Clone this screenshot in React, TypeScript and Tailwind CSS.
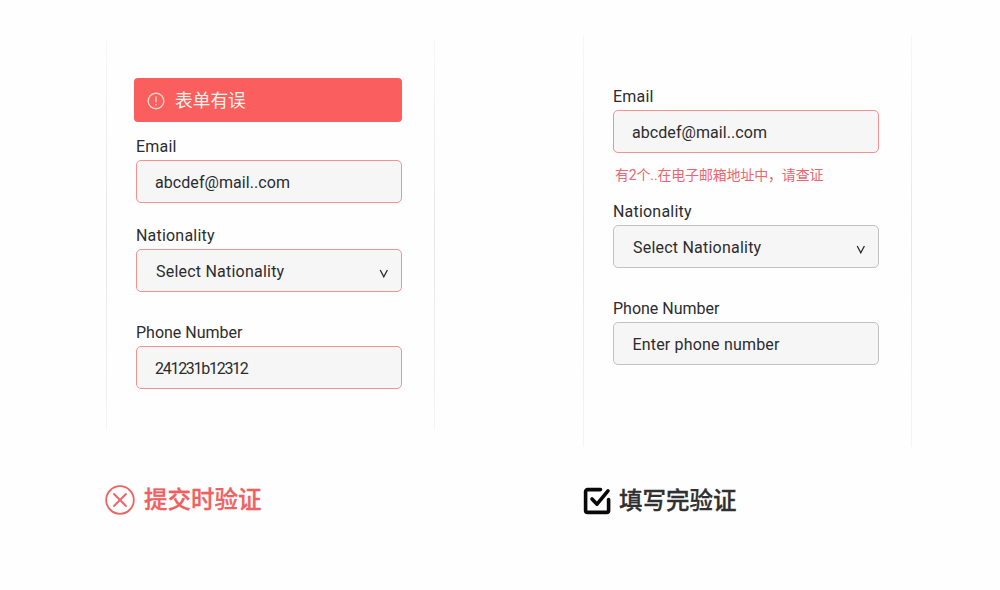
import React from 'react';
import clsx from 'clsx';

interface FieldProps {
  label: string;
  labelClass?: string;
  value: string;
  valueClass?: string;
  invalid?: boolean;
  select?: boolean;
  className?: string;
}

const Field: React.FC<FieldProps> = ({ label, labelClass, value, valueClass, invalid, select, className }) => (
  <div className={clsx('w-[266px]', className)}>
    <div className={clsx('mb-1 h-5 whitespace-nowrap text-base leading-[22px] text-[#2c2c2e]', labelClass)}>{label}</div>
    <div
      className={clsx(
        'flex h-[43px] items-center justify-between rounded-[5px] border bg-[#f6f6f6] pr-[13px] pl-[18px]',
        invalid ? 'border-[#f29292]' : 'border-[#c2c2c2]',
      )}
    >
      <span className={clsx('pt-0.5 whitespace-nowrap text-base leading-5 text-[#2c2c2e]', valueClass)}>{value}</span>
      {select && (
        <svg className="mt-[5px] h-[9px] w-[9px]" viewBox="0 0 9 9" fill="none" stroke="#2c2c2e" strokeWidth="1.3">
          <path d="M1.2 1 4.8 7.8 8.4 1" />
        </svg>
      )}
    </div>
  </div>
);

// Side edges fade out towards the top and bottom of the card
const Edge = () => (
  <div className="w-px shrink-0 bg-linear-to-b from-[#f7f7f7] via-[#e6e6e6] to-[#f4f4f4]" />
);

const SubmitPanel = () => (
  <section className="w-[329px]">
    <div className="mt-[40px] flex h-[390px]">
      <Edge />
      <div className="flex-1 pt-[38px] pl-[27px]">
        <div className="mb-[14px] flex h-[44px] w-[268px] items-center rounded-[4px] bg-[#fb5e5e] pl-[12.5px]">
          <svg className="mt-px h-[18px] w-[18px]" viewBox="0 0 18 18" fill="none" stroke="#ffd0c4" strokeWidth="1.4">
            <circle cx="9" cy="9" r="7.8" />
            <path d="M9 4.5v6M9 12v1.5" />
          </svg>
          <span className="ml-[10.5px] pt-0.5 text-[17.7px] leading-6 text-[#fff3ec]">表单有误</span>
        </div>
        <div className="pl-[2px]">
          <Field label="Email" labelClass="tracking-[0.2px]" value="abcdef@mail..com" valueClass="tracking-[0.07px]" invalid />
          <Field
            className="mt-[22px]"
            label="Nationality"
            labelClass="tracking-[0.2px]"
            value="Select Nationality"
            valueClass="pl-px tracking-[0.22px]"
            invalid
            select
          />
          <Field className="mt-[30px]" label="Phone Number" value="241231b12312" valueClass="tracking-[-1.28px]" invalid />
        </div>
      </div>
      <Edge />
    </div>
    <div className="mt-[55px] -ml-px flex h-[30px] items-center">
      <svg className="h-[30px] w-[30px] shrink-0" viewBox="0 0 30 30" fill="none" stroke="#ef6262" strokeWidth="1.8">
        <circle cx="15" cy="15" r="13.8" />
        <path d="m9 9 12 12M21 9 9 21" strokeLinecap="round" />
      </svg>
      <h2 className="ml-[9px] text-[23.5px] leading-[30px] font-medium text-[#f06060] [-webkit-text-stroke:0.3px_#f06060]">提交时验证</h2>
    </div>
  </section>
);

const BlurPanel = () => (
  <section className="w-[329px]">
    <div className="mt-[35px] flex h-[412px]">
      <Edge />
      <div className="flex-1 pt-[51px] pl-[29px]">
        <Field label="Email" labelClass="tracking-[0.2px]" value="abcdef@mail..com" valueClass="tracking-[0.07px]" invalid />
        <p className="mt-[12px] h-5 pl-[2px] text-[14px] leading-5 tracking-[-0.17px] whitespace-nowrap text-[#ee6470]">
          有2个..在电子邮箱地址中，请查证
        </p>
        <Field
          className="mt-[16px]"
          label="Nationality"
          labelClass="tracking-[0.2px]"
          value="Select Nationality"
          valueClass="pl-px tracking-[0.22px]"
          select
        />
        <Field className="mt-[30px]" label="Phone Number" value="Enter phone number" valueClass="pl-[0.5px] tracking-[0.18px]" />
      </div>
      <Edge />
    </div>
    <div className="mt-[39px] flex h-[30px] items-center">
      <svg className="h-7 w-7 shrink-0" viewBox="0 0 28 28" fill="none" stroke="#090909" strokeWidth="3.6" strokeLinecap="round" strokeLinejoin="round">
        <path d="M17.5 2.6H4.6a2 2 0 0 0-2 2v18.8a2 2 0 0 0 2 2h19a2 2 0 0 0 2-2V12.5" />
        <path d="m9 12 5 5.2L25 3.8" />
      </svg>
      <h2 className="ml-[8px] text-[23.5px] leading-[30px] font-medium text-[#303030] [-webkit-text-stroke:0.3px_#303030]">填写完验证</h2>
    </div>
  </section>
);

export default function App() {
  return (
    <main className="flex h-[590px] w-[1000px] gap-[148px] overflow-hidden bg-[#fefefe] pl-[106px] font-['Roboto','Noto_Sans_CJK_SC',sans-serif]">
      <SubmitPanel />
      <BlurPanel />
    </main>
  );
}
